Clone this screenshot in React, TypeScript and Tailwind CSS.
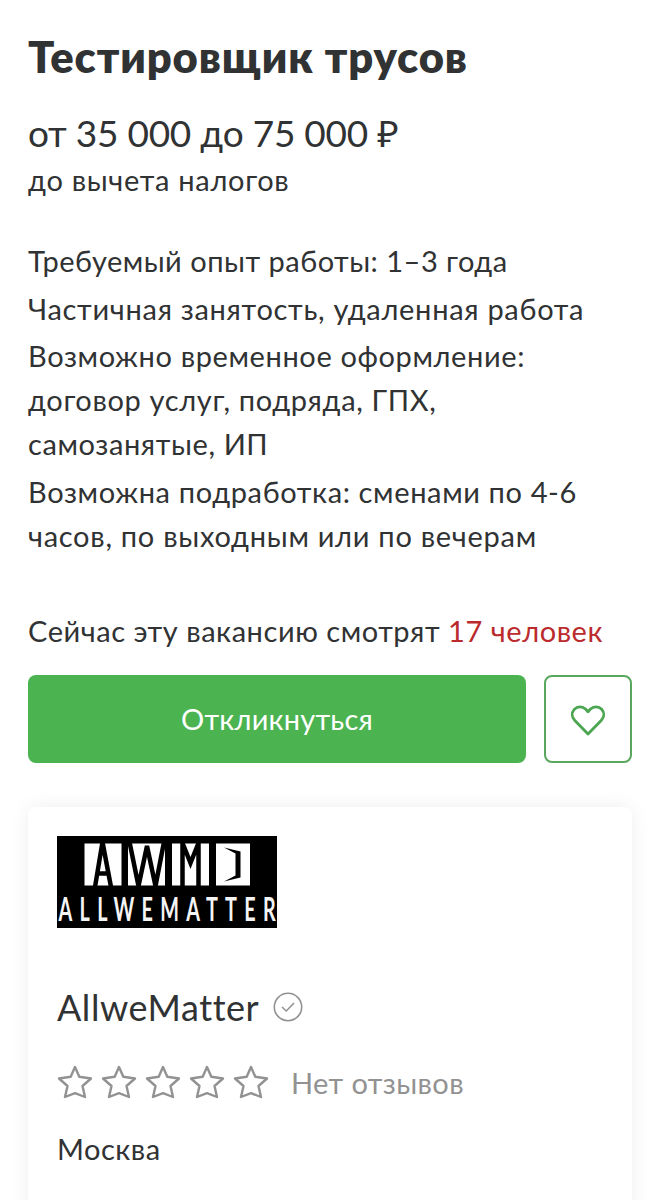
const conditions = [
  [{ text: 'Требуемый опыт работы: 1–3 года', tracking: 'tracking-[0.5px]' }],
  [{ text: 'Частичная занятость, удаленная работа', tracking: 'tracking-[0.7px]' }],
  [
    { text: 'Возможно временное оформление:', tracking: 'tracking-[0.62px]' },
    { text: 'договор услуг, подряда, ГПХ,', tracking: 'tracking-[0.65px]' },
    { text: 'самозанятые, ИП', tracking: 'tracking-[0.6px]' },
  ],
  [
    { text: 'Возможна подработка: сменами по 4-6', tracking: 'tracking-[0.63px]' },
    { text: 'часов, по выходным или по вечерам', tracking: 'tracking-[0.72px]' },
  ],
];

function CompanyLogo() {
  return (
    <svg width="220" height="92" viewBox="0 0 220 92" className="block">
      <rect width="220" height="92" fill="#000" />
      {/* white tiles with the letters cut out of them */}
      <g fill="#fff">
        <rect x="27.5" y="7.5" width="37" height="42" />
        <rect x="71" y="7.5" width="37" height="42" />
        <rect x="115" y="7.5" width="37" height="42" />
        <rect x="159" y="7.5" width="34" height="42" />
      </g>
      <g fill="none" stroke="#000" strokeWidth="4.5">
        <path d="M38 51L45.5 6L54 51M40 37.5H52" />
        <path d="M72.5 6L81.5 50L90 10L98.5 50L107 6" />
        <path d="M125.5 50V7L133.5 27L141.5 7V50" />
      </g>
      <path d="M167 11.5L183.5 15.5V41.5L167 45.5L178.5 39.5V17.5Z" fill="#000" />
      <g transform="translate(1.5 84.5) scale(0.6 1)">
        <text fill="#f4f4f4" fontSize="33" fontWeight="700" textLength="362" lengthAdjust="spacing" fontFamily="'Lato', sans-serif">ALLWEMATTER</text>
      </g>
    </svg>
  );
}

function Star() {
  return (
    <svg width="36" height="36" viewBox="0 0 36 36" fill="none" stroke="#929292" strokeWidth="2.4" strokeLinejoin="round">
      <path d="M18 3L22.3 12.8L34 14.5L25.5 22L28 33L18 29.2L8 33L10.500 22L2 14.5L13.7 12.8Z" />
    </svg>
  );
}

export default function App() {
  return (
    <div className="h-[1200px] w-[660px] overflow-hidden bg-white px-7 pt-7 font-['Lato','Noto_Sans',sans-serif] text-[29px] leading-[44px] text-[#303233] whitespace-nowrap">
      <h1 className="text-[43.5px] font-extrabold leading-[56px] tracking-[0.9px]">Тестировщик трусов</h1>

      <div className="mt-[25px]">
        <p className="text-[37px] leading-[48px] tracking-[-0.23px]">от 35 000 до 75 000 ₽</p>
        <p className="mt-px tracking-[0.7px]">до вычета налогов</p>
      </div>

      <div className="mt-[37px] flex flex-col gap-[3.5px]">
        {conditions.map((lines) => (
          <p key={lines[0].text}>
            {lines.map((line) => (
              <span key={line.text} className={`block ${line.tracking}`}>{line.text}</span>
            ))}
          </p>
        ))}
      </div>

      <p className="mt-[51.5px] tracking-[0.55px]">
        Сейчас эту вакансию смотрят <span className="text-[#bb2a2d]">17 человек</span>
      </p>

      <div className="mt-[22px] flex gap-[18px]">
        <button className="h-[88px] w-[498px] rounded-lg bg-[#4bb34f] tracking-[0.2px] text-white">Откликнуться</button>
        <button className="flex h-[88px] w-[88px] items-center justify-center rounded-lg border-2 border-[#59a75d]">
          <svg width="36" height="34" viewBox="0 0 36 34" fill="none" stroke="#4ca651" strokeWidth="2.8" strokeLinejoin="round" className="mt-0.5">
            <path d="M18 31L4.8 17.5C1.5 14 1.5 9.5 4.3 6.3C7.3 3 12.5 3 15.5 6L18 8.8L20.5 6C23.5 3 28.7 3 31.7 6.3C34.5 9.5 34.5 14 31.2 17.5Z" />
          </svg>
        </button>
      </div>

      <section className="mt-11 h-[420px] rounded-lg bg-white px-[29px] pt-[29px] shadow-[0_0_20px_rgba(0,0,0,0.07)]">
        <CompanyLogo />
        <div className="mt-[55px] flex h-12 items-center gap-[14px]">
          <span className="text-[36px] leading-[48px] tracking-[0.55px]">AllweMatter</span>
          <svg width="30" height="30" viewBox="0 0 30 30" fill="none" stroke="#929292" strokeWidth="1.6" className="-mt-px">
            <circle cx="15" cy="15" r="13.7" />
            <path d="M9 15L13.3 19L21 11" />
          </svg>
        </div>
        <div className="mt-[30px] flex h-11 items-center text-[#929292]">
          <div className="-mt-0.5 flex gap-2">
            {[1, 2, 3, 4, 5].map((n) => <Star key={n} />)}
          </div>
          <span className="ml-[22px] tracking-[0.4px]">Нет отзывов</span>
        </div>
        <p className="mt-[22px] tracking-[0.5px]">Москва</p>
      </section>
    </div>
  );
}
